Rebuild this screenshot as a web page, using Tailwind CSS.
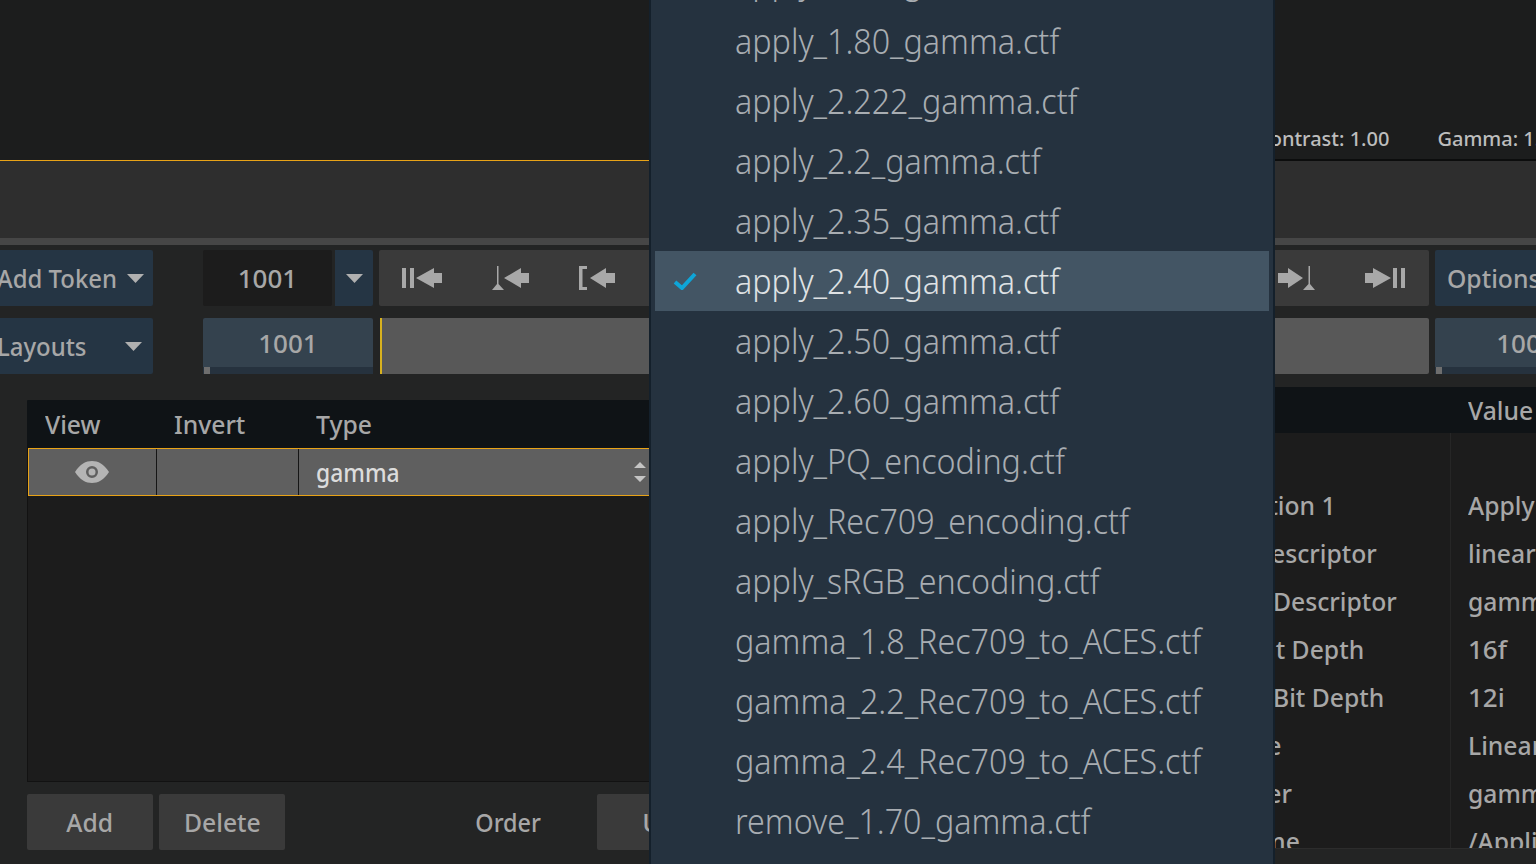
<!DOCTYPE html>
<html><head><meta charset="utf-8">
<script src="https://cdn.jsdelivr.net/npm/@tailwindcss/browser@4"></script>
<title>Gamma menu</title></head>
<body class="m-0 bg-[#232424]">
<div class="relative w-[1536px] h-[864px] overflow-hidden flex flex-col bg-[#232424] text-[#a7a7a7] text-[26px] font-medium font-['Noto_Sans',sans-serif] leading-none">

  <!-- viewer -->
  <div class="flex h-[161px] shrink-0 bg-[#1c1d1d]">
    <div class="w-[1000px] shrink-0 border-b border-[#e8a317]"></div>
    <div class="flex-1 border-b-2 border-[#0c0d0d] flex items-end pb-[10px] pl-[257px] gap-[48px] whitespace-nowrap text-[20px] font-medium text-[#bdbdbd]">
      <span>Contrast: 1.00</span><span>Gamma: 1.00</span>
    </div>
  </div>

  <!-- toolbar -->
  <div class="h-[77px] shrink-0 bg-[#2e2e2e]"></div>
  <div class="h-[7px] shrink-0 bg-[#464646]"></div>

  <!-- control rows -->
  <div class="shrink-0 pt-[5px] flex flex-col gap-[12px]">
    <div class="flex h-[56px] items-stretch">
      <div class="-ml-[15px] w-[168px] shrink-0 bg-[#253544] rounded-[2px] flex items-center pl-[12px] justify-between pr-[11px]">
        <span class="inline-block origin-left scale-x-[.92] whitespace-nowrap">Add Token</span>
        <svg class="shrink-0" width="17" height="9" viewBox="0 0 17 9"><path d="M0 0H17L8.500 9Z" fill="#b0b0b0"/></svg>
      </div>
      <div class="ml-[50px] w-[129px] shrink-0 bg-[#1c1c1c] rounded-[2px] flex items-center justify-center">1001</div>
      <div class="ml-[3px] w-[38px] shrink-0 bg-[#253544] rounded-r-[2px] flex items-center justify-center">
        <svg width="17" height="9" viewBox="0 0 17 9"><path d="M0 0H17L8.500 9Z" fill="#b0b0b0"/></svg>
      </div>
      <div class="ml-[6px] w-[1050px] shrink-0 bg-[#3a3a3a] rounded-[2px] flex items-center justify-between pl-[23px] pr-[24px]">
        <div class="flex items-center gap-[50px]">
          <svg width="40" height="24" viewBox="0 0 40 24" fill="#a8a8a8"><path d="M0 2h4v20H0zM8 2h4v20H8zM14 12 32 2v5h8v10h-8v5z"/></svg>
          <svg width="37" height="24" viewBox="0 0 37 24" fill="#a8a8a8"><path d="M5 0h1.500v18L12 24H0l5-6zM12 12 29 2v5h8v10h-8v5z"/></svg>
          <svg width="36" height="24" viewBox="0 0 36 24" fill="#a8a8a8"><path d="M0 0h8v3H3.500v18H8v3H0zM11 12 27 2v5h9v10h-9v5z"/></svg>
        </div>
        <div class="flex items-center gap-[50px]">
          <svg width="37" height="24" viewBox="0 0 37 24" fill="#a8a8a8"><path d="M0 7h10V2l15 10-15 10v-5H0zM30.500 0H32v18l5 6H25l5.500-6z"/></svg>
          <svg width="40" height="24" viewBox="0 0 40 24" fill="#a8a8a8"><path d="M0 7h8V2l18 10L8 22v-5H0zM28 2h4v20h-4zM36 2h4v20h-4z"/></svg>
        </div>
      </div>
      <div class="ml-[6px] w-[190px] shrink-0 bg-[#253544] rounded-[2px] flex items-center pl-[12px]"><span class="inline-block origin-left scale-x-95">Options</span></div>
    </div>
    <div class="flex h-[56px] items-stretch">
      <div class="-ml-[15px] w-[168px] shrink-0 bg-[#253544] rounded-[2px] flex items-center pl-[12px] justify-between pr-[11px]">
        <span class="inline-block origin-left scale-x-[.92]">Layouts</span>
        <svg width="17" height="9" viewBox="0 0 17 9"><path d="M0 0H17L8.500 9Z" fill="#b0b0b0"/></svg>
      </div>
      <div class="ml-[50px] w-[170px] shrink-0 bg-[#34424e] rounded-[2px] flex flex-col">
        <div class="flex-1 flex items-center justify-center">1001</div>
        <div class="h-[7px] bg-[#26323e]"><div class="ml-[1px] w-[6px] h-full bg-[#6e6e6e]"></div></div>
      </div>
      <div class="ml-[7px] w-[1049px] shrink-0 bg-[#585858] rounded-r-[2px] border-l-2 border-[#d8b21f]"></div>
      <div class="ml-[6px] w-[182px] shrink-0 bg-[#34424e] rounded-[2px] flex flex-col">
        <div class="flex-1 flex items-center justify-center">1001</div>
        <div class="h-[7px] bg-[#26323e]"><div class="ml-[1px] w-[6px] h-full bg-[#6e6e6e]"></div></div>
      </div>
    </div>
  </div>

  <!-- panels -->
  <div class="flex-1 flex pt-[13px] min-h-0">
    <!-- left table panel -->
    <div class="ml-[27px] mt-[13px] w-[950px] shrink-0 flex flex-col">
      <div class="flex h-[48px] items-center bg-[#0f1316] rounded-t-[1px]">
        <div class="w-[129px] pl-[18px]"><span class="inline-block origin-left scale-x-95">View</span></div>
        <div class="w-[142px] pl-[18px]"><span class="inline-block origin-left scale-x-95">Invert</span></div>
        <div class="pl-[18px]"><span class="inline-block origin-left scale-x-95">Type</span></div>
      </div>
      <div class="h-[334px] bg-[#1c1c1c] border border-[#121212] border-t-0">
        <div class="flex h-[48px] bg-[#5f5f5f] border border-[#e8a317]">
          <div class="w-[128px] border-r border-[#161616] flex items-center justify-center pr-[2px]">
            <svg width="34" height="22" viewBox="0 0 34 22"><path fill-rule="evenodd" fill="#b4b4b4" d="M0 11C5 3 11 0 17 0s12 3 17 11c-5 8-11 11-17 11S5 19 0 11Zm17-6a6 6 0 1 0 0 12 6 6 0 0 0 0-12Zm0 2.500a3.500 3.500 0 1 1 0 7 3.500 3.500 0 0 1 0-7Z"/></svg>
          </div>
          <div class="w-[142px] border-r border-[#161616]"></div>
          <div class="w-[351px] pl-[17px] flex items-center justify-between pr-[4px] text-[#dcdcdc]">
            <span class="inline-block origin-left scale-x-[.88]">gamma</span>
            <svg width="12" height="20" viewBox="0 0 12 20" fill="#c4c4c4"><path d="M6 0l6 6H0zM0 14h12l-6 6z"/></svg>
          </div>
        </div>
      </div>
      <div class="mt-[12px] flex h-[56px] gap-[6px]">
        <div class="w-[126px] bg-[#3a3a3a] rounded-[2px] flex items-center justify-center"><span class="inline-block scale-x-95">Add</span></div>
        <div class="w-[126px] bg-[#3a3a3a] rounded-[2px] flex items-center justify-center"><span class="inline-block scale-x-95">Delete</span></div>
        <div class="w-[300px] flex items-center justify-end pr-[50px]"><span class="inline-block origin-right scale-x-90">Order</span></div>
        <div class="w-[126px] bg-[#3a3a3a] rounded-[2px] flex items-center justify-center">Up</div>
        <div class="w-[126px] bg-[#3a3a3a] rounded-[2px] flex items-center justify-center">Down</div>
      </div>
    </div>
    <!-- right table panel -->
    <div class="ml-[23px] flex-1 flex flex-col h-[462px]">
      <div class="h-[46px] shrink-0 bg-[#0f1316] flex items-center pl-[468px] whitespace-nowrap"><span class="inline-block origin-left scale-x-95">Value</span></div>
      <div class="flex-1 min-h-0 bg-[#1c1c1c] border-b border-[#2c2c2c] overflow-hidden flex">
        <div class="w-[450px] shrink-0 pt-[48px] pl-[182px] whitespace-nowrap">
          <div class="h-[48px] flex items-center"><span class="inline-block origin-left scale-x-95">Application 1</span></div>
          <div class="h-[48px] flex items-center"><span class="inline-block origin-left scale-x-95">Input Descriptor</span></div>
          <div class="h-[48px] flex items-center"><span class="inline-block origin-left scale-x-95">Output Descriptor</span></div>
          <div class="h-[48px] flex items-center"><span class="inline-block origin-left scale-x-95">Input Bit Depth</span></div>
          <div class="h-[48px] flex items-center"><span class="inline-block origin-left scale-x-95">Output Bit Depth</span></div>
          <div class="h-[48px] flex items-center"><span class="inline-block origin-left scale-x-95">Baseline</span></div>
          <div class="h-[48px] flex items-center"><span class="inline-block origin-left scale-x-95">Identifier</span></div>
          <div class="h-[48px] flex items-center"><span class="inline-block origin-left scale-x-95">File Name</span></div>
        </div>
        <div class="flex-1 border-l border-[#262626] pt-[48px] pl-[17px] whitespace-nowrap">
          <div class="h-[48px] flex items-center"><span class="inline-block origin-left scale-x-95">Apply</span></div>
          <div class="h-[48px] flex items-center"><span class="inline-block origin-left scale-x-95">linear</span></div>
          <div class="h-[48px] flex items-center"><span class="inline-block origin-left scale-x-95">gamma</span></div>
          <div class="h-[48px] flex items-center">16f</div>
          <div class="h-[48px] flex items-center">12i</div>
          <div class="h-[48px] flex items-center"><span class="inline-block origin-left scale-x-95">Linear</span></div>
          <div class="h-[48px] flex items-center"><span class="inline-block origin-left scale-x-95">gamma</span></div>
          <div class="h-[48px] flex items-center"><span class="inline-block origin-left scale-x-95">/Applications</span></div>
        </div>
      </div>
    </div>
  </div>

  <!-- popup menu -->
  <div class="absolute left-[649px] top-[-49px] w-[626px] h-[960px] bg-[#25323f] border-x-2 border-[#14202b] px-[4px] text-[34px] font-light text-[#a8adb2] whitespace-nowrap">
    <div class="h-[60px] flex items-center pl-[80px]"><span class="inline-block origin-left scale-x-[.948]">apply_1.70_gamma.ctf</span></div>
    <div class="h-[60px] flex items-center pl-[80px]"><span class="inline-block origin-left scale-x-[.948]">apply_1.80_gamma.ctf</span></div>
    <div class="h-[60px] flex items-center pl-[80px]"><span class="inline-block origin-left scale-x-[.948]">apply_2.222_gamma.ctf</span></div>
    <div class="h-[60px] flex items-center pl-[80px]"><span class="inline-block origin-left scale-x-[.948]">apply_2.2_gamma.ctf</span></div>
    <div class="h-[60px] flex items-center pl-[80px]"><span class="inline-block origin-left scale-x-[.948]">apply_2.35_gamma.ctf</span></div>
    <div class="h-[60px] flex items-center bg-[#435564] text-[#dfe2e4] pl-[18px]">
      <svg class="w-[24px] h-[18px] mr-[38px]" viewBox="0 0 24 18"><path d="M2 10l7 6L22 2" fill="none" stroke="#0ea5d8" stroke-width="4"/></svg>
      <span class="inline-block origin-left scale-x-[.948]">apply_2.40_gamma.ctf</span></div>
    <div class="h-[60px] flex items-center pl-[80px]"><span class="inline-block origin-left scale-x-[.948]">apply_2.50_gamma.ctf</span></div>
    <div class="h-[60px] flex items-center pl-[80px]"><span class="inline-block origin-left scale-x-[.948]">apply_2.60_gamma.ctf</span></div>
    <div class="h-[60px] flex items-center pl-[80px]"><span class="inline-block origin-left scale-x-[.948]">apply_PQ_encoding.ctf</span></div>
    <div class="h-[60px] flex items-center pl-[80px]"><span class="inline-block origin-left scale-x-[.948]">apply_Rec709_encoding.ctf</span></div>
    <div class="h-[60px] flex items-center pl-[80px]"><span class="inline-block origin-left scale-x-[.948]">apply_sRGB_encoding.ctf</span></div>
    <div class="h-[60px] flex items-center pl-[80px]"><span class="inline-block origin-left scale-x-[.948]">gamma_1.8_Rec709_to_ACES.ctf</span></div>
    <div class="h-[60px] flex items-center pl-[80px]"><span class="inline-block origin-left scale-x-[.948]">gamma_2.2_Rec709_to_ACES.ctf</span></div>
    <div class="h-[60px] flex items-center pl-[80px]"><span class="inline-block origin-left scale-x-[.948]">gamma_2.4_Rec709_to_ACES.ctf</span></div>
    <div class="h-[60px] flex items-center pl-[80px]"><span class="inline-block origin-left scale-x-[.948]">remove_1.70_gamma.ctf</span></div>
  </div>
</div>
</body></html>
